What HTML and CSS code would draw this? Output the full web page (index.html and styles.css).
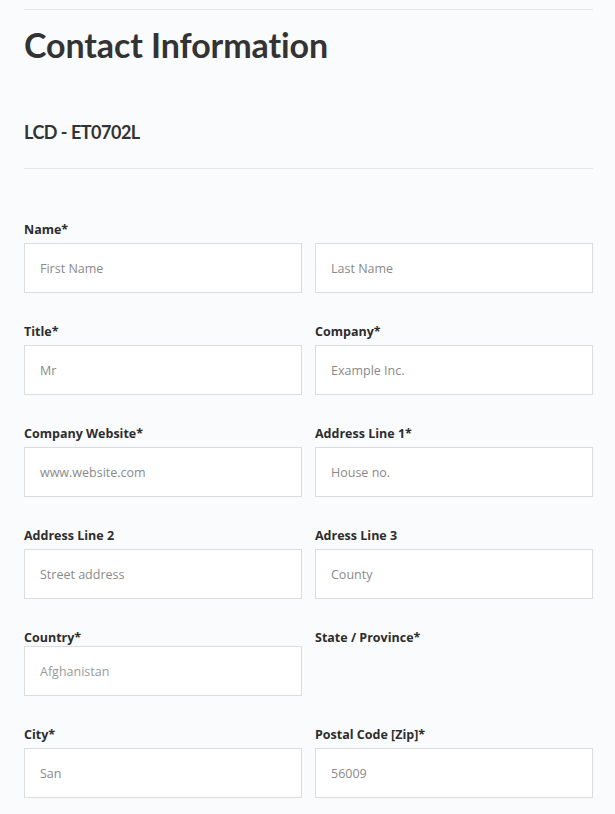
FILE: index.html
```html
<!DOCTYPE html>
<html>
<head>
<meta charset="utf-8">
<link rel="stylesheet" href="styles.css">
</head>
<body>
<div class="page">
  <hr class="rule top">
  <h1 class="title">Contact Information</h1>
  <h2 class="product">LCD - ET0702L</h2>
  <hr class="rule">
  <form class="form">
    <div class="field full">
      <label class="label">Name*</label>
      <div class="pair">
        <input class="input" placeholder="First Name">
        <input class="input" placeholder="Last Name">
      </div>
    </div>
    <div class="grid">
      <div class="field"><label class="label">Title*</label><input class="input" placeholder="Mr"></div>
      <div class="field"><label class="label">Company*</label><input class="input" placeholder="Example Inc."></div>
      <div class="field"><label class="label">Company Website*</label><input class="input" placeholder="www.website.com"></div>
      <div class="field"><label class="label">Address Line 1*</label><input class="input" placeholder="House no."></div>
      <div class="field"><label class="label">Address Line 2</label><input class="input" placeholder="Street address"></div>
      <div class="field"><label class="label">Adress Line 3</label><input class="input" placeholder="County"></div>
      <div class="field tight"><label class="label">Country*</label><input class="input select" placeholder="Afghanistan"></div>
      <div class="field tight"><label class="label">State / Province*</label></div>
      <div class="field"><label class="label">City*</label><input class="input" placeholder="San"></div>
      <div class="field"><label class="label">Postal Code [Zip]*</label><input class="input" placeholder="56009"></div>
    </div>
  </form>
</div>
</body>
</html>
```
FILE: styles.css
```css
html, body {
  margin: 0;
  padding: 0;
  background: #fafbfd;
}
body {
  font-family: Lato, "Open Sans", sans-serif;
  color: #333;
}
.page {
  padding: 9px 22px 0 24px;
}
.rule {
  border: 0;
  border-top: 1px solid #e4e6e8;
  margin: 0;
}
.title {
  font-size: 34px;
  font-weight: 700;
  margin: 15px 0 0;
  line-height: 40px;
  letter-spacing: -0.1px;
}
.product {
  font-size: 18px;
  font-weight: 700;
  margin: 55px 0 0;
  line-height: 24px;
  letter-spacing: -0.5px;
}
.product + .rule {
  margin-top: 24px;
}
.form {
  padding-top: 53px;
}
.field {
  display: flex;
  flex-direction: column;
}
.label {
  font-family: "Open Sans", Lato, sans-serif;
  font-size: 12.5px;
  font-weight: 700;
  line-height: 16px;
  margin-bottom: 5px;
  color: #2d2d2d;
}
.pair, .grid {
  display: grid;
  grid-template-columns: 278px 278px;
  column-gap: 13px;
}
.grid {
  row-gap: 31px;
  margin-top: 31px;
}
.grid .field.tight .label {
  margin-bottom: 0;
}
.input {
  box-sizing: border-box;
  height: 50px;
  width: 100%;
  border: 1px solid #dcdcdc;
  background: #fff;
  padding: 0 15px;
  font-family: "Open Sans", Lato, sans-serif;
  font-size: 12.5px;
  color: #555;
  outline: none;
  margin: 0;
}
.input::placeholder {
  color: #8a8a8a;
}
.select::placeholder {
  color: #9a9a9a;
}
```
